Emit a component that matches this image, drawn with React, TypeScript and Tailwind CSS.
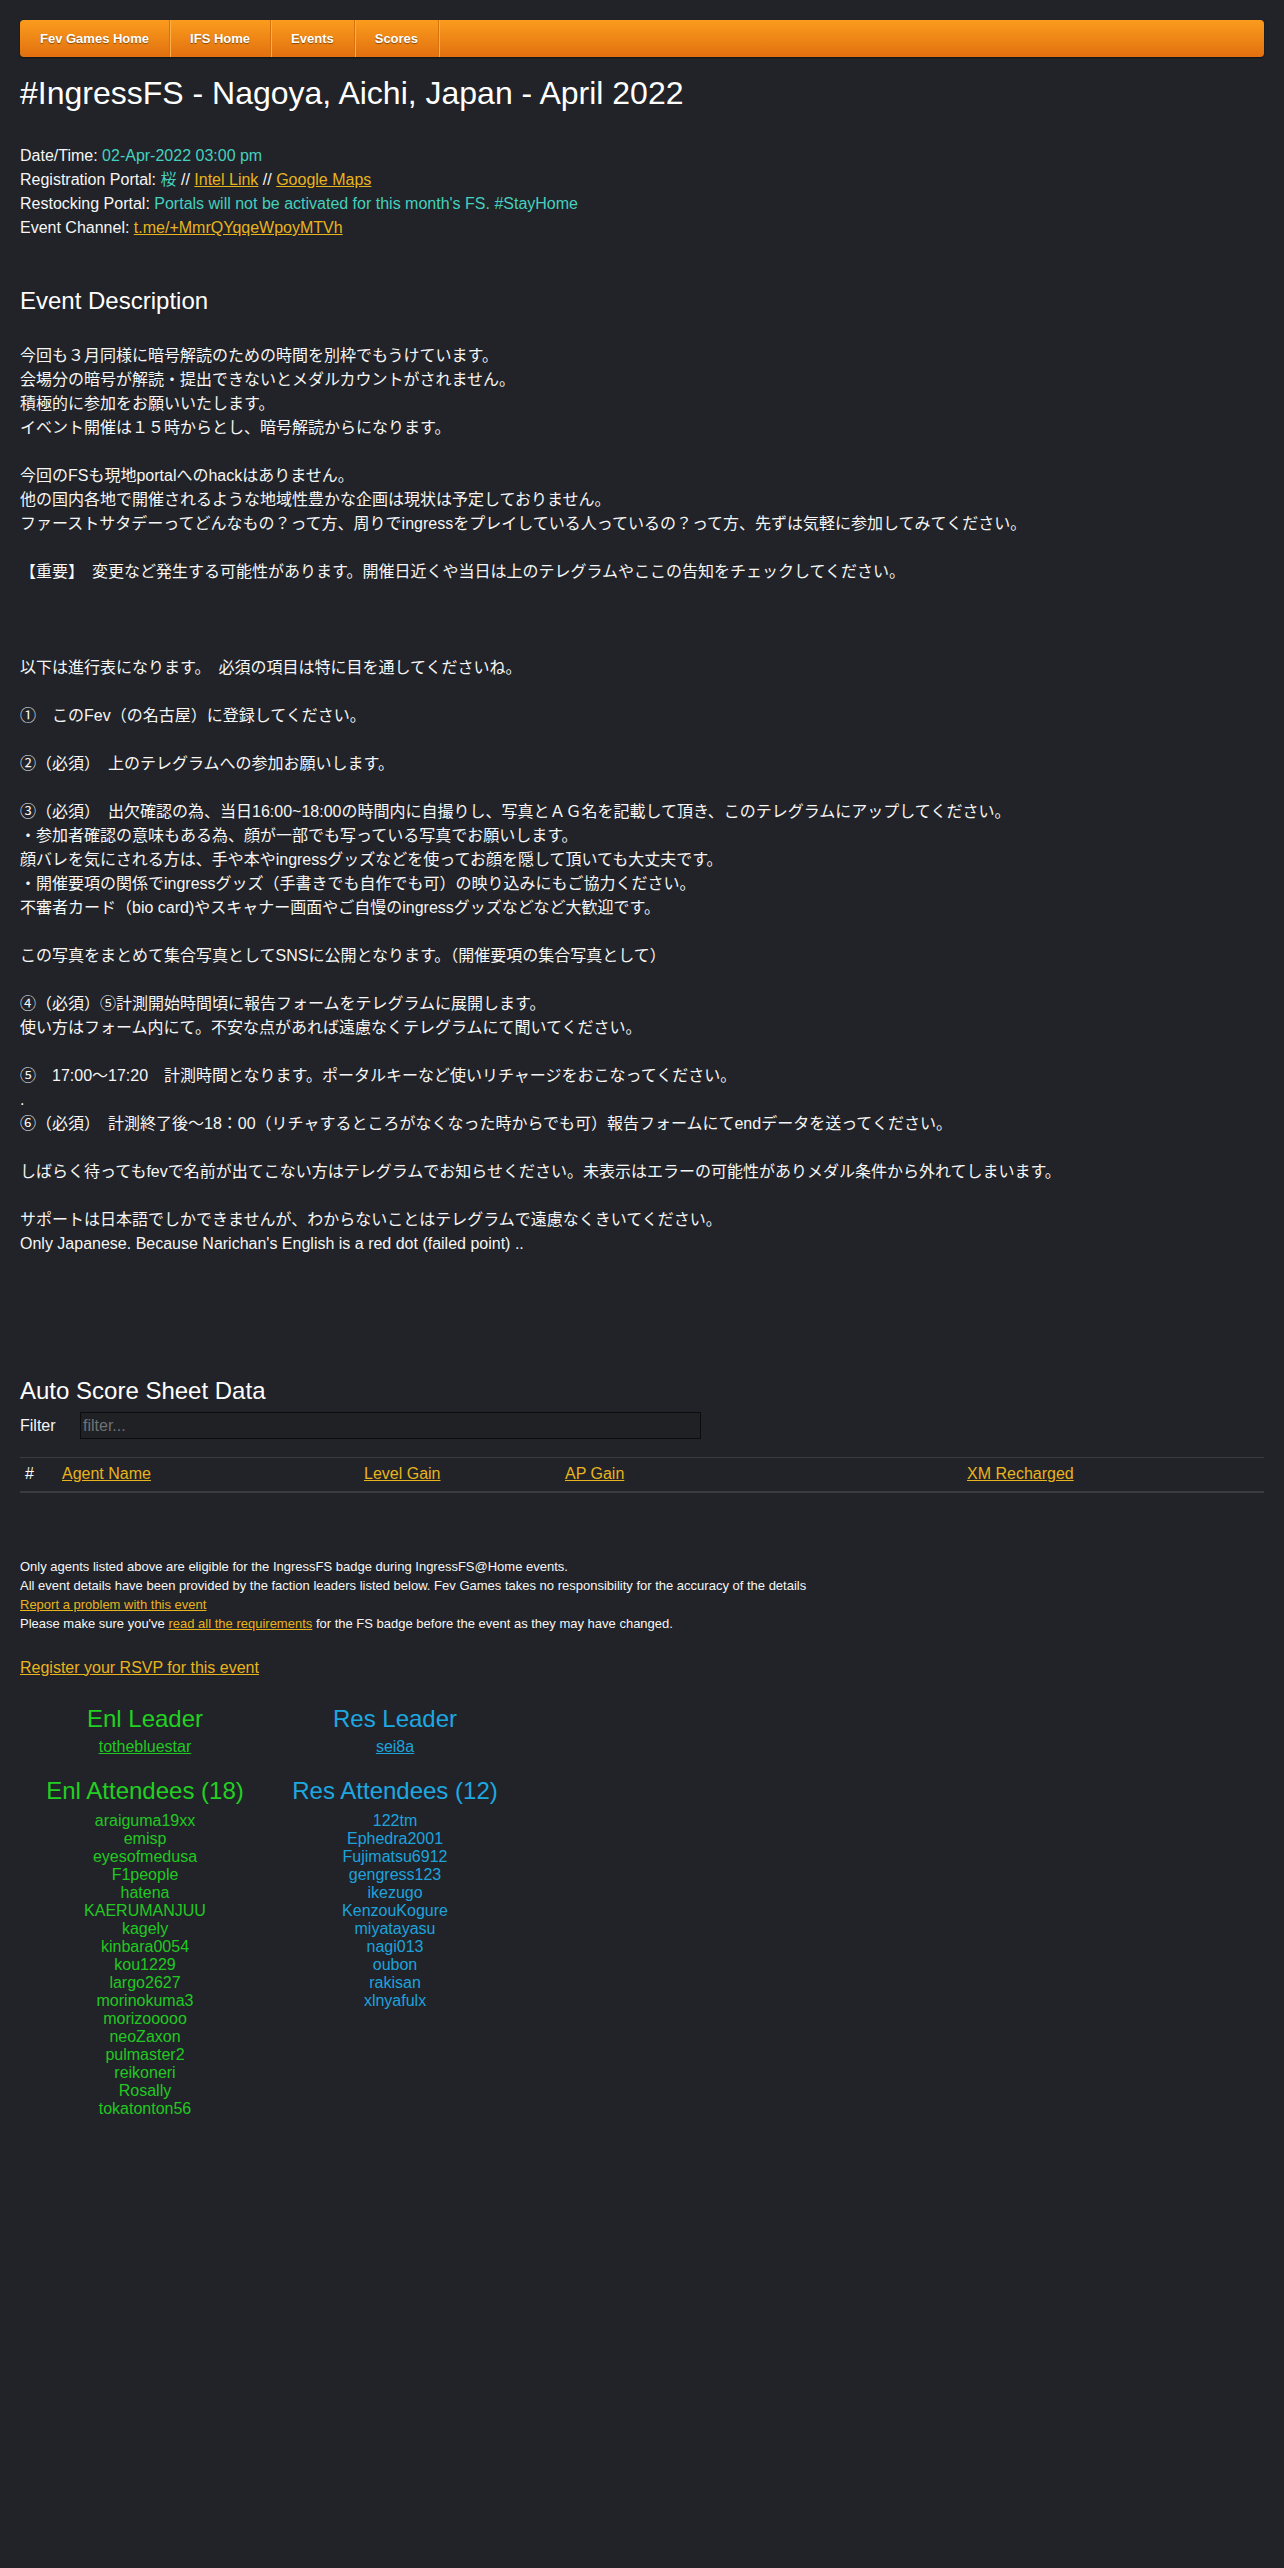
import React from "react";

const FONT = '"Liberation Sans", Arial, "Noto Sans CJK JP", sans-serif';

const descLines: string[] = [
  "今回も３月同様に暗号解読のための時間を別枠でもうけています。",
  "会場分の暗号が解読・提出できないとメダルカウントがされません。",
  "積極的に参加をお願いいたします。",
  "イベント開催は１５時からとし、暗号解読からになります。",
  "",
  "今回のFSも現地portalへのhackはありません。",
  "他の国内各地で開催されるような地域性豊かな企画は現状は予定しておりません。",
  "ファーストサタデーってどんなもの？って方、周りでingressをプレイしている人っているの？って方、先ずは気軽に参加してみてください。",
  "",
  "【重要】　変更など発生する可能性があります。開催日近くや当日は上のテレグラムやここの告知をチェックしてください。",
  "",
  "",
  "",
  "以下は進行表になります。　必須の項目は特に目を通してくださいね。",
  "",
  "①　このFev（の名古屋）に登録してください。",
  "",
  "②（必須）　上のテレグラムへの参加お願いします。",
  "",
  "③（必須）　出欠確認の為、当日16:00~18:00の時間内に自撮りし、写真とＡＧ名を記載して頂き、このテレグラムにアップしてください。",
  "・参加者確認の意味もある為、顔が一部でも写っている写真でお願いします。",
  "顔バレを気にされる方は、手や本やingressグッズなどを使ってお顔を隠して頂いても大丈夫です。",
  "・開催要項の関係でingressグッズ（手書きでも自作でも可）の映り込みにもご協力ください。",
  "不審者カード（bio card)やスキャナー画面やご自慢のingressグッズなどなど大歓迎です。",
  "",
  "この写真をまとめて集合写真としてSNSに公開となります。（開催要項の集合写真として）",
  "",
  "④（必須）⑤計測開始時間頃に報告フォームをテレグラムに展開します。",
  "使い方はフォーム内にて。不安な点があれば遠慮なくテレグラムにて聞いてください。",
  "",
  "⑤　17:00～17:20　計測時間となります。ポータルキーなど使いリチャージをおこなってください。",
  ".",
  "⑥（必須）　計測終了後～18：00（リチャするところがなくなった時からでも可）報告フォームにてendデータを送ってください。",
  "",
  "しばらく待ってもfevで名前が出てこない方はテレグラムでお知らせください。未表示はエラーの可能性がありメダル条件から外れてしまいます。",
  "",
  "サポートは日本語でしかできませんが、わからないことはテレグラムで遠慮なくきいてください。",
  "Only Japanese. Because Narichan's English is a red dot (failed point) ..",
];

const enl = [
  "araiguma19xx",
  "emisp",
  "eyesofmedusa",
  "F1people",
  "hatena",
  "KAERUMANJUU",
  "kagely",
  "kinbara0054",
  "kou1229",
  "largo2627",
  "morinokuma3",
  "morizooooo",
  "neoZaxon",
  "pulmaster2",
  "reikoneri",
  "Rosally",
  "tokatonton56",
];

const res = [
  "122tm",
  "Ephedra2001",
  "Fujimatsu6912",
  "gengress123",
  "ikezugo",
  "KenzouKogure",
  "miyatayasu",
  "nagi013",
  "oubon",
  "rakisan",
  "xlnyafulx",
];

const navItems = ["Fev Games Home", "IFS Home", "Events", "Scores"];

export default function App() {
  return (
    <div
      className="min-h-[2568px] w-full bg-[#212328] text-[#f6f6f6]"
      style={{ fontFamily: FONT }}
    >
      <div className="px-5 pt-5">
        {/* Navbar */}
        <nav className="flex h-[37px] w-full items-stretch rounded-[4px] bg-gradient-to-b from-[#fb9c1d] to-[#e1700f] shadow-[0_1px_2px_rgba(0,0,0,0.5)]">
          {navItems.map((item) => (
            <a
              key={item}
              className="flex items-center border-r border-r-[#d9710d] px-5 text-[13px] font-bold text-white shadow-[1px_0_0_#fbae4a] [text-shadow:0_1px_1px_rgba(0,0,0,0.45)]"
            >
              {item}
            </a>
          ))}
        </nav>

        {/* Title */}
        <h1 className="mt-[18px] text-[32px] leading-[36px] font-normal text-white">
          #IngressFS - Nagoya, Aichi, Japan - April 2022
        </h1>

        {/* Info */}
        <div className="mt-[33px] text-[16px] leading-[24px]">
          <div>
            Date/Time: <span className="text-[#45d0bf]">02-Apr-2022 03:00 pm</span>
          </div>
          <div>
            Registration Portal: <span className="text-[#45d0bf]">桜</span> //{" "}
            <a className="text-[#e8b41e] underline">Intel Link</a> //{" "}
            <a className="text-[#e8b41e] underline">Google Maps</a>
          </div>
          <div>
            Restocking Portal:{" "}
            <span className="text-[#45d0bf]">
              Portals will not be activated for this month's FS. #StayHome
            </span>
          </div>
          <div>
            Event Channel:{" "}
            <a className="text-[#e8b41e] underline">t.me/+MmrQYqqeWpoyMTVh</a>
          </div>
        </div>

        {/* Event Description */}
        <h3 className="mt-[48px] text-[24px] leading-[26px] font-normal text-white">
          Event Description
        </h3>
        <div className="mt-[30px] text-[16px] leading-[24px]">
          {descLines.map((l, i) => (
            <div key={i} className="h-[24px] whitespace-pre">
              {l}
            </div>
          ))}
        </div>

        {/* Auto score */}
        <h3 className="mt-[122px] text-[24px] leading-[26px] font-normal text-white">
          Auto Score Sheet Data
        </h3>
        <div className="mt-[8px] flex items-center text-[16px]">
          <label className="w-[60px]">Filter</label>
          <input
            className="h-[27px] w-[621px] border border-[#0b0c0e] bg-[#1f2125] px-[2px] text-[16px] text-white outline-none placeholder:text-[#6f7176]"
            placeholder="filter..."
          />
        </div>

        <table className="mt-[18px] w-full border-collapse text-[16px]">
          <thead>
            <tr className="border-t border-t-[#383b42] border-b-2 border-b-[#383b42]">
              <th className="h-[34px] w-[37px] px-[5px] text-left font-normal text-white">#</th>
              <th className="w-[302px] px-[5px] text-left font-normal">
                <a className="text-[#e8b41e] underline">Agent Name</a>
              </th>
              <th className="w-[201px] px-[5px] text-left font-normal">
                <a className="text-[#e8b41e] underline">Level Gain</a>
              </th>
              <th className="w-[402px] px-[5px] text-left font-normal">
                <a className="text-[#e8b41e] underline">AP Gain</a>
              </th>
              <th className="px-[5px] text-left font-normal">
                <a className="text-[#e8b41e] underline">XM Recharged</a>
              </th>
            </tr>
          </thead>
        </table>

        {/* Footer notes */}
        <div className="mt-[64px] text-[13px] leading-[19px]">
          <div>Only agents listed above are eligible for the IngressFS badge during IngressFS@Home events.</div>
          <div>
            All event details have been provided by the faction leaders listed below. Fev Games takes no
            responsibility for the accuracy of the details
          </div>
          <div>
            <a className="text-[#e8b41e] underline">Report a problem with this event</a>
          </div>
          <div>
            Please make sure you've{" "}
            <a className="text-[#e8b41e] underline">read all the requirements</a> for the FS badge before
            the event as they may have changed.
          </div>
        </div>

        <div className="mt-[23px] text-[16px] leading-[24px]">
          <a className="text-[#e8b41e] underline">Register your RSVP for this event</a>
        </div>

        {/* Factions */}
        <div className="mt-[25px] grid w-[500px] grid-cols-2 text-center">
          <div>
            <div className="text-[24px] leading-[27px] text-[#22d022]">Enl Leader</div>
            <div className="mt-[3px] text-[16px] leading-[24px]">
              <a className="text-[#22c822] underline">tothebluestar</a>
            </div>
          </div>
          <div>
            <div className="text-[24px] leading-[27px] text-[#1ea8e2]">Res Leader</div>
            <div className="mt-[3px] text-[16px] leading-[24px]">
              <a className="text-[#1ea2dc] underline">sei8a</a>
            </div>
          </div>
          <div className="mt-[18px]">
            <div className="text-[24px] leading-[27px] text-[#22d022]">Enl Attendees (18)</div>
            <div className="mt-[8px] text-[16px] leading-[18px] text-[#22c822]">
              {enl.map((n) => (
                <div key={n}>{n}</div>
              ))}
            </div>
          </div>
          <div className="mt-[18px]">
            <div className="text-[24px] leading-[27px] text-[#1ea8e2]">Res Attendees (12)</div>
            <div className="mt-[8px] text-[16px] leading-[18px] text-[#1ea2dc]">
              {res.map((n) => (
                <div key={n}>{n}</div>
              ))}
            </div>
          </div>
        </div>
      </div>
    </div>
  );
}
